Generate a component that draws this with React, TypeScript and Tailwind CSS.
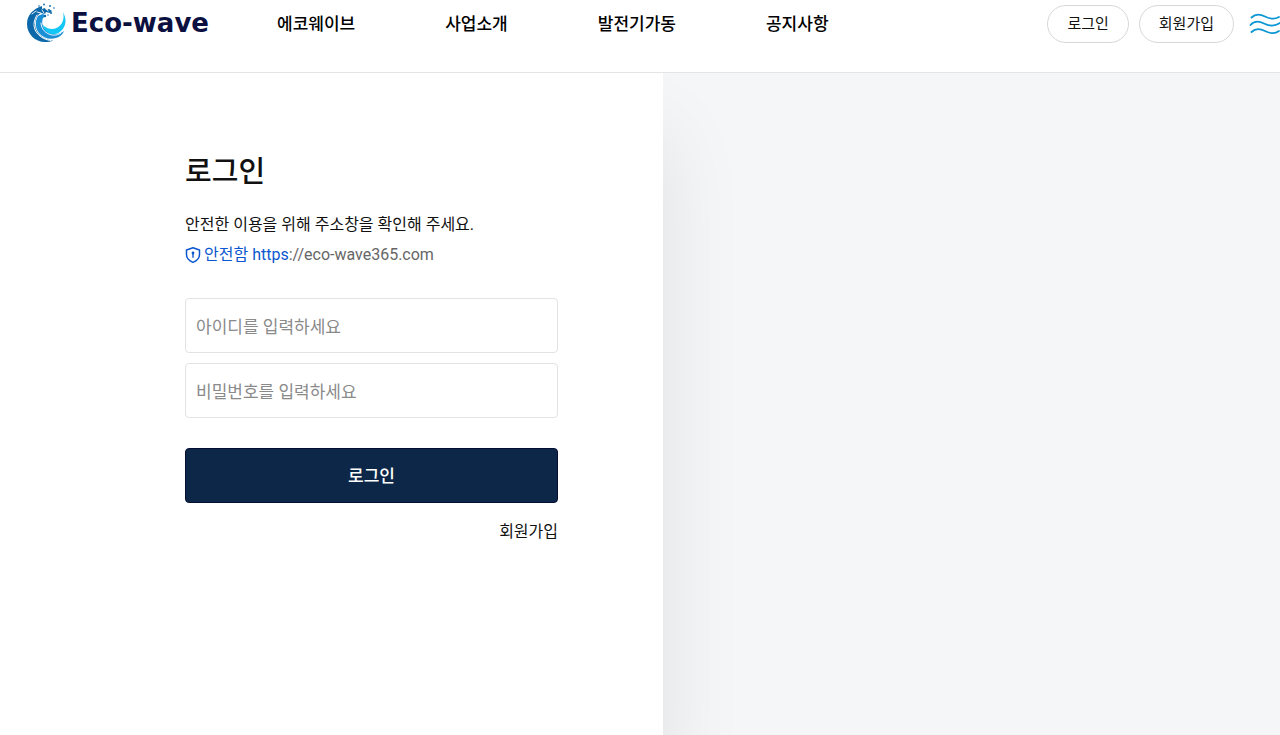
import React from "react";

const navItems = ["에코웨이브", "사업소개", "발전기가동", "공지사항"];

function WaveLogo() {
  return (
    <svg viewBox="0 0 40 40" className="h-10 w-10 shrink-0" aria-hidden="true">
      <path fill="#0c68a9" d="M16 3C7 6 1 12 1 21c0 10 8 18 18 18 3 0 6-.5 8-1.500C17 37 9 30 9 21c0-5 2-9 6-11l4 1 1-2 4 1 2-2-3-2-3 1-1-2-3 1z" />
      <path fill="#1a8fd6" d="M12 13c-3 5-3 12 1 17 4 5 11 7 17 5 4-1 7-4 8-7-5 4-12 4-17 0-4-3-6-8-4-13l3-2-3-2-3 1z" />
      <path fill="#12c6f6" d="M37 9c1.500 6 0 11-3.500 14C29 27 22 27 17 22c1 6 6 9.500 12 9 6-1 10.500-7 10.500-13 0-3-1-6-2.500-9z" />
      <g fill="none" stroke="#fff" strokeLinecap="round">
        <path strokeWidth="1" d="M11 12c-4 6-4 13 0 18 4 5 9 7 14 7.500" />
        <path strokeWidth=".9" d="M15 20c0 6 5 11 11 12 4 .5 7-.5 9-2" />
        <path strokeWidth=".9" d="M6 11l4-3M11 9l4 1M16 7l2 3M21 6l1 2" />
      </g>
      <g fill="#0c68a9">
        <circle cx="13" cy="3" r=".8" />
        <circle cx="18" cy="1.500" r=".9" />
        <circle cx="24" cy="3" r=".9" />
        <circle cx="28" cy="5" r=".8" />
        <circle cx="25" cy="10" r="1" />
        <circle cx="19" cy="13" r="1.200" />
        <circle cx="22" cy="12" r=".7" />
      </g>
    </svg>
  );
}

function ShieldIcon() {
  return (
    <svg viewBox="0 0 16 18" className="h-[18px] w-4 shrink-0" fill="none" stroke="#0b57d0" aria-hidden="true">
      <path strokeWidth="1.5" strokeLinejoin="round" d="M8 1.800 14.500 4v4.600c0 3.600-2.700 6.300-6.500 7.800-3.800-1.500-6.500-4.200-6.500-7.800V4z" />
      <path strokeWidth="1.4" d="M8 7.500v4.300" />
      <circle cx="8" cy="7" r="1.400" fill="#0b57d0" stroke="none" />
    </svg>
  );
}

function MenuWaves() {
  return (
    <svg viewBox="0 0 32 22" className="h-[22px] w-8" fill="none" stroke="#0d96d4" strokeWidth="1.8" strokeLinecap="round" aria-hidden="true">
      <path d="M3.500 4.500C7 1 12 1 17 3.500S27 6.500 31 4" />
      <path d="M2.500 12C6 8 11 8 16 10.500S27 13.500 32 10" />
      <path d="M3.500 19C7 15.500 12 15.500 17 18S27 21 31 18" />
    </svg>
  );
}

export default function App() {
  return (
    <div className="flex min-h-screen flex-col overflow-x-hidden bg-white font-['Roboto','Noto_Sans_CJK_KR',sans-serif] text-[#111]">
      <header className="relative z-10 flex h-[73px] items-start border-b border-[#e5e5e5] bg-white pl-[26px]">
        <a href="#" className="flex h-[46px] w-[206px] shrink-0 items-center gap-[5px] font-['DejaVu_Sans',sans-serif] text-[26px] font-bold text-[#0b1040]">
          <WaveLogo />
          Eco-wave
        </a>
        <nav className="flex h-[50px] items-center gap-[90px] pl-[45px] text-[17px] font-medium whitespace-nowrap text-black">
          {navItems.map((item) => (
            <a key={item} href="#">
              {item}
            </a>
          ))}
        </nav>
        <div className="ml-auto flex shrink-0 items-center gap-[10px] pt-[5px] text-[15px]">
          <a href="#" className="flex h-[38px] items-center rounded-full border border-[#d8d8d8] px-[19px]">
            로그인
          </a>
          <a href="#" className="flex h-[38px] items-center rounded-full border border-[#d8d8d8] px-[19px]">
            회원가입
          </a>
          <button type="button" aria-label="메뉴" className="ml-1">
            <MenuWaves />
          </button>
        </div>
      </header>
      <main className="flex grow bg-[#f5f6f8]">
        <section className="flex w-[51.8%] justify-end bg-white pt-[77px] pr-[105px] shadow-[0_60px_80px_rgba(0,0,0,0.09)]">
          <form className="w-[373px]" onSubmit={(e) => e.preventDefault()}>
            <h1 className="text-[29px] leading-[44px] font-medium">로그인</h1>
            <p className="mt-4 text-base leading-[30px] whitespace-nowrap">안전한 이용을 위해 주소창을 확인해 주세요.</p>
            <p className="flex items-center gap-[3px] text-base leading-[30px] text-[#666]">
              <ShieldIcon />
              <span>
                <span className="text-[#0b57d0]">안전함 https</span>://eco-wave365.com
              </span>
            </p>
            <div className="mt-7 flex flex-col gap-[10px] text-[17px]">
              <input
                type="text"
                aria-label="아이디"
                placeholder="아이디를 입력하세요"
                className="h-[55px] w-full rounded border border-[#e3e3e3] px-[10px] pt-[2px] placeholder:text-[#8a8a8a]"
              />
              <input
                type="password"
                aria-label="비밀번호"
                placeholder="비밀번호를 입력하세요"
                className="h-[55px] w-full rounded border border-[#e3e3e3] px-[10px] pt-[2px] placeholder:text-[#8a8a8a]"
              />
            </div>
            <button type="submit" className="mt-[30px] h-[55px] w-full rounded border border-[#060f32] bg-[#0d2748] pt-[2px] text-[17px] font-medium text-white">
              로그인
            </button>
            <div className="mt-4 text-right text-base leading-[26px]">
              <a href="#">회원가입</a>
            </div>
          </form>
        </section>
      </main>
    </div>
  );
}
